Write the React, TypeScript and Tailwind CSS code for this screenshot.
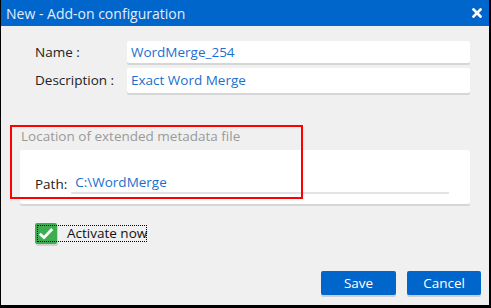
import React from "react";

const font = { fontFamily: '"Open Sans", "Noto Sans", sans-serif' };

const Field = ({ label, value, h }: { label: string; value: string; h: string }) => (
  <div className="flex items-center">
    <div className="w-[92px] text-[13.5px] text-[#222]">{label}</div>
    <div
      className={`flex-1 ${h} bg-white rounded-[2px] shadow-[0_2px_0_#d6d6d6] flex items-center pl-[4px] text-[13.5px] text-[#1a6fd0]`}
    >
      {value}
    </div>
  </div>
);

const App = () => {
  return (
    <div
      className="w-[491px] h-[308px] flex flex-col border-l border-r-2 border-b-[3px] border-black bg-white"
      style={font}
    >
      <div className="h-[26px] bg-[#0066cc] flex items-center justify-between pl-[5px] pr-[7px]">
        <span className="text-[14px] text-[#e3ecf7]">New - Add-on configuration</span>
        <svg width="10" height="10" viewBox="0 0 10 10">
          <path d="M1.5 1.5 L8.5 8.5 M8.5 1.5 L1.5 8.5" stroke="white" strokeWidth="2.6" strokeLinecap="square" />
        </svg>
      </div>

      <div className="flex-1 bg-[#f0f0f0] relative flex flex-col">
        <div className="pl-[34px] pr-[19px] pt-[15px] flex flex-col gap-[5px]">
          <Field label="Name :" value="WordMerge_254" h="h-[22px]" />
          <Field label="Description :" value="Exact Word Merge" h="h-[25px]" />
        </div>

        <div className="pl-[19px] pr-[19px] mt-[31px]">
          <div className="text-[13.5px] text-[#9a9a9a] h-[26px] leading-[24px] pl-[1px]">
            Location of extended metadata file
          </div>
          <div className="h-[54px] bg-white rounded-[2px] shadow-[0_2px_0_#d6d6d6] flex items-end pl-[15px] pr-[21px] pb-[10px]">
            <span className="text-[13.5px] text-[#222] mr-[4px] leading-[20px]">Path:</span>
            <div className="flex-1 h-[22px] border-b-2 border-[#e3e3e3] text-[13.5px] text-[#1a6fd0] pl-[4px] leading-[20px]">
              C:\WordMerge
            </div>
          </div>
        </div>

        <div className="pl-[34px] mt-[18px]">
          <div className="relative inline-flex items-center">
            <div className="w-[22px] h-[21px] bg-[#3cae4f] rounded-[2px] shadow-[1px_2px_0_#d0d0d0] flex items-center justify-center">
              <svg width="16" height="13" viewBox="0 0 16 13">
                <path d="M1.8 6.8 L6 10.6 L14.2 2" fill="none" stroke="white" strokeWidth="2.8" />
              </svg>
            </div>
            <span className="ml-[10px] text-[13.5px] text-[#111] leading-[17px]">Activate now</span>
            <span className="absolute left-[2px] top-[2px] right-0 bottom-[2px] border border-dotted border-black pointer-events-none" />
          </div>
        </div>

        <div className="mt-auto flex justify-end gap-[11px] pr-[8px] pb-[10px]">
          <button className="w-[75px] h-[24px] bg-[#0066cc] text-white text-[13.5px] rounded-[2px] shadow-[0_2px_0_#cfcfcf]">
            Save
          </button>
          <button className="w-[74px] h-[24px] bg-[#0066cc] text-white text-[13.5px] rounded-[2px] shadow-[0_2px_0_#cfcfcf]">
            Cancel
          </button>
        </div>

        <div className="absolute left-[9px] top-[99px] w-[293px] h-[74px] border-2 border-[#ff0000] pointer-events-none" />
      </div>
    </div>
  );
};

export default App;
